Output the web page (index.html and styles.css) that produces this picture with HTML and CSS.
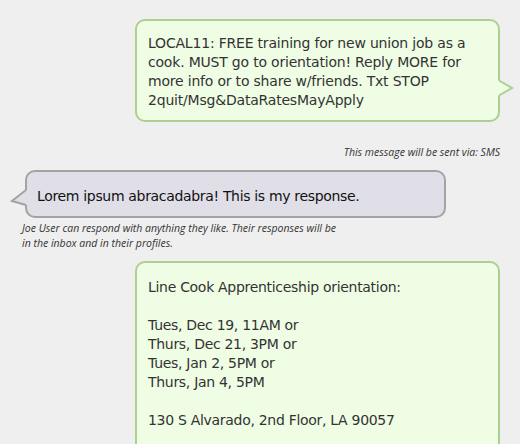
FILE: index.html
```html
<!DOCTYPE html>
<html>
<head>
<meta charset="utf-8">
<link rel="stylesheet" href="styles.css">
</head>
<body>
<div class="thread">
  <div class="bubble bubble-out bubble-first">
    <p class="bubble-text text-first">LOCAL11: FREE training for new union job as a cook. MUST go to orientation! Reply MORE for more info or to share w/friends. Txt STOP 2quit/Msg&amp;DataRatesMayApply</p>
    <svg class="tail tail-right" width="20" height="18" viewBox="0 0 20 18">
      <polygon points="0,1.5 4,1.5 17,9 4,16.5 0,16.5" fill="#f0fde5"/>
      <polyline points="4,1.5 17,9 4,16.5" fill="none" stroke="#acd090" stroke-width="2"/>
    </svg>
  </div>
  <div class="meta meta-right">This message will be sent via: SMS</div>
  <div class="bubble bubble-in">
    <p class="bubble-text text-in">Lorem ipsum abracadabra! This is my response.</p>
    <svg class="tail tail-left" width="20" height="18" viewBox="0 0 20 18">
      <polygon points="20,2 16,2 2,13 16,17 20,17" fill="#e0dfe8"/>
      <polyline points="16,2 2,13 16,17" fill="none" stroke="#a3a3a6" stroke-width="2"/>
    </svg>
  </div>
  <div class="meta meta-left">Joe User can respond with anything they like. Their responses will be in the inbox and in their profiles.</div>
  <div class="bubble bubble-out bubble-last">
    <p class="bubble-text text-last">Line Cook Apprenticeship orientation:<br><br>Tues, Dec 19, 11AM or<br>Thurs, Dec 21, 3PM or<br>Tues, Jan 2, 5PM or<br>Thurs, Jan 4, 5PM<br><br>130 S Alvarado, 2nd Floor, LA 90057</p>
  </div>
</div>
</body>
</html>
```

FILE: styles.css
```css
html, body {
  margin: 0;
  padding: 0;
}
body {
  background: #efefef;
  font-family: Verdana, "DejaVu Sans", sans-serif;
  overflow: hidden;
  height: 444px;
}
.thread {
  padding: 19px 20px 0 22px;
  display: flex;
  flex-direction: column;
}
.bubble {
  position: relative;
  box-sizing: border-box;
  border-width: 2px;
  border-style: solid;
  border-radius: 10px;
}
.bubble-out {
  align-self: flex-end;
  width: 365px;
  background: #f0fde5;
  border-color: #acd090;
}
.bubble-first {
  padding: 13px 12px 10px 11px;
}
.bubble-last {
  margin-top: 10px;
  padding: 15px 12px 40px 11px;
}
.bubble-in {
  align-self: flex-start;
  margin-left: 3px;
  margin-top: 10px;
  width: 421px;
  background: #e0dfe8;
  border-color: #a3a3a6;
  padding: 15px 10px 10px 10px;
}
.bubble-text {
  margin: 0;
  font-size: 14px;
  line-height: 19px;
  color: #333333;
}
.text-first {
  letter-spacing: -0.2px;
}
.text-in {
  color: #111111;
  letter-spacing: -0.33px;
}
.text-last {
  letter-spacing: -0.3px;
}
.tail {
  position: absolute;
  display: block;
}
.tail-right {
  right: -17px;
  bottom: 23px;
}
.tail-left {
  left: -17px;
  top: 16px;
}
.meta {
  font-family: "Open Sans", sans-serif;
  font-style: italic;
  font-size: 10.5px;
  line-height: 15px;
  color: #333333;
}
.meta-right {
  text-align: right;
  margin-top: 23px;
}
.meta-left {
  width: 325px;
  margin-top: 3px;
}
```
